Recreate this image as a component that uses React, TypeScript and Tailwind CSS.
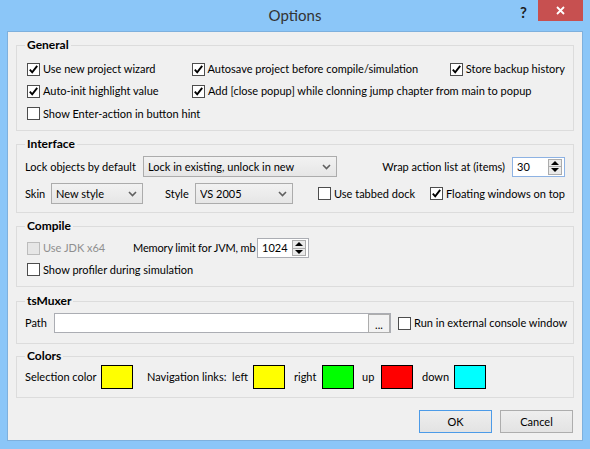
import React from 'react'

type CheckProps = {
  label: string
  checked?: boolean
  disabled?: boolean
  className?: string
}

const Check: React.FC<CheckProps> = ({ label, checked, disabled, className = '' }) => (
  <label className={`flex items-center gap-[3px] whitespace-nowrap ${className}`}>
    <span
      className={`w-[13px] h-[13px] shrink-0 border flex items-center justify-center ${
        disabled ? 'border-[#BCBCBC] bg-[#E6E6E6]' : 'border-[#4D4D4D] bg-white'
      }`}
    >
      {checked && (
        <svg width="11" height="11" viewBox="0 0 11 11">
          <path d="M1.8 5.6 L4.2 8.3 L9.2 1.8" fill="none" stroke="#000" strokeWidth="1.9" />
        </svg>
      )}
    </span>
    <span className={disabled ? 'text-[#8F8F8F]' : ''}>{label}</span>
  </label>
)

const Chevron = () => (
  <svg width="9" height="6" viewBox="0 0 9 6" className="shrink-0">
    <path d="M1 1 L4.5 4.5 L8 1" fill="none" stroke="#606060" strokeWidth="1.6" />
  </svg>
)

const Combo: React.FC<{ value: string; className: string }> = ({ value, className }) => (
  <div
    className={`h-[21px] shrink-0 border border-[#ACACAC] bg-linear-to-b from-[#F2F2F2] to-[#E6E6E6] flex items-center pl-[4px] pr-[5px] ${className}`}
  >
    <span className="flex-1 truncate">{value}</span>
    <Chevron />
  </div>
)

const Spin: React.FC<{ value: string; className: string }> = ({ value, className }) => (
  <div className={`h-[20px] shrink-0 border bg-white flex items-center pl-[4px] pr-[2px] ${className}`}>
    <span className="flex-1">{value}</span>
    <div className="w-[14px] h-[16px] flex flex-col border border-[#ACACAC] bg-[#EAEAEA]">
      <div className="flex-1 flex items-center justify-center border-b border-[#ACACAC]">
        <svg width="8" height="4" viewBox="0 0 8 4">
          <path d="M0 4 L4 0 L8 4 Z" fill="#000" />
        </svg>
      </div>
      <div className="flex-1 flex items-center justify-center">
        <svg width="8" height="4" viewBox="0 0 8 4">
          <path d="M0 0 L8 0 L4 4 Z" fill="#000" />
        </svg>
      </div>
    </div>
  </div>
)

const Group: React.FC<{ title: string; className: string; children: React.ReactNode }> = ({
  title,
  className,
  children,
}) => (
  <fieldset className={`min-w-0 border border-[#DCDCDC] px-[8px] ${className}`}>
    <legend className="px-[2px] font-bold text-[12px] leading-[16px]">{title}</legend>
    {children}
  </fieldset>
)

const Swatch: React.FC<{ color: string }> = ({ color }) => (
  <div className={`w-[32px] h-[24px] shrink-0 border border-black ${color}`} />
)

const App: React.FC = () => {
  return (
    <div className="w-[590px] h-[449px] bg-[#8BC6F8] flex flex-col whitespace-nowrap font-['Lato','Noto_Sans',sans-serif] text-[11px] leading-[16px] text-black">
      {/* title bar */}
      <div className="h-[31px] shrink-0 relative">
        <div className="text-center text-[15px] leading-[31px] text-[#333333]">Options</div>
        <div className="absolute top-0 right-[7px] flex items-start">
          <span className="mt-[4px] mr-[11px] text-[15px] leading-[16px] font-bold text-[#1E1E1E]">?</span>
          <div className="w-[45px] h-[21px] bg-[#C75050] flex items-center justify-center">
            <svg width="9" height="9" viewBox="0 0 9 9">
              <path d="M1 1 L8 8 M8 1 L1 8" stroke="#fff" strokeWidth="1.8" />
            </svg>
          </div>
        </div>
      </div>

      {/* client area */}
      <div className="ml-[7px] w-[576px] h-[410px] border border-[#7EB0DD] bg-[#F0F0F0] px-[8px] pt-[5px] flex flex-col">
        <Group title="General" className="h-[94px]">
          <div className="pt-[5px] flex flex-col">
            <div className="h-[22px] flex items-center">
              <Check className="w-[167px] pl-[2px]" checked label="Use new project wizard" />
              <Check className="w-[259px]" checked label="Autosave project before compile/simulation" />
              <Check checked label="Store backup history" />
            </div>
            <div className="h-[22px] flex items-center">
              <Check className="w-[167px] pl-[2px]" checked label="Auto-init highlight value" />
              <Check checked label="Add [close popup] while clonning jump chapter from main to popup" />
            </div>
            <div className="h-[23px] flex items-center">
              <Check className="pl-[2px]" label="Show Enter-action in button hint" />
            </div>
          </div>
        </Group>

        <Group title="Interface" className="mt-[5px] h-[77px]">
          <div className="pt-[4px] flex flex-col gap-[6px]">
            <div className="h-[21px] flex items-center">
              <span className="w-[118px] shrink-0">Lock objects by default</span>
              <Combo className="w-[194px]" value="Lock in existing, unlock in new" />
              <span className="flex-1 text-right mr-[7px]">Wrap action list at (items)</span>
              <Spin className="w-[53px] border-[#8DB2E3]" value="30" />
            </div>
            <div className="h-[21px] flex items-center">
              <span className="w-[26px] shrink-0">Skin</span>
              <Combo className="w-[92px]" value="New style" />
              <span className="w-[52px] shrink-0 pl-[22px]">Style</span>
              <Combo className="w-[98px]" value="VS 2005" />
              <Check className="ml-[25px] w-[115px]" label="Use tabbed dock" />
              <Check checked label="Floating windows on top" />
            </div>
          </div>
        </Group>

        <Group title="Compile" className="mt-[5px] h-[69px]">
          <div className="pt-[4px] flex flex-col">
            <div className="h-[20px] flex items-center">
              <Check className="w-[108px] pl-[2px]" disabled label="Use JDK x64" />
              <span className="w-[124px] shrink-0 tracking-[-0.15px]">Memory limit for JVM, mb</span>
              <Spin className="w-[52px] border-[#ABADB3]" value="1024" />
            </div>
            <div className="h-[23px] flex items-center">
              <Check className="pl-[2px]" label="Show profiler during simulation" />
            </div>
          </div>
        </Group>

        <Group title="tsMuxer" className="mt-[6px] h-[51px]">
          <div className="pt-[4px] flex items-center">
            <span className="w-[29px] shrink-0">Path</span>
            <div className="w-[337px] h-[20px] shrink-0 border border-[#ABADB3] bg-white flex justify-end items-center">
              <div className="w-[22px] h-[19px] mt-[1px] border border-[#ADADAD] bg-[#F2F2F2] flex items-end justify-center pb-[1px] leading-[12px]">
                ...
              </div>
            </div>
            <Check className="ml-[7px]" label="Run in external console window" />
          </div>
        </Group>

        <Group title="Colors" className="mt-[4px] h-[50px]">
          <div className="pt-[1px] flex items-center">
            <span className="w-[76px] shrink-0">Selection color</span>
            <Swatch color="bg-[#FFFF00]" />
            <span className="w-[120px] shrink-0 pl-[14px] whitespace-pre">Navigation links:  left</span>
            <Swatch color="bg-[#FFFF00]" />
            <span className="w-[37px] shrink-0 pl-[9px]">right</span>
            <Swatch color="bg-[#00FF00]" />
            <span className="w-[27px] shrink-0 pl-[8px]">up</span>
            <Swatch color="bg-[#FF0000]" />
            <span className="w-[41px] shrink-0 pl-[9px]">down</span>
            <Swatch color="bg-[#00FFFF]" />
          </div>
        </Group>

        <div className="mt-[12px] flex justify-end gap-[8px] pr-[1px]">
          <button className="w-[73px] h-[23px] border border-[#4C9BE8] bg-linear-to-b from-[#EEEEEE] to-[#E3E3E3]">
            OK
          </button>
          <button className="w-[73px] h-[23px] border border-[#ADADAD] bg-linear-to-b from-[#EEEEEE] to-[#E3E3E3]">
            Cancel
          </button>
        </div>
      </div>
    </div>
  )
}

export default App
